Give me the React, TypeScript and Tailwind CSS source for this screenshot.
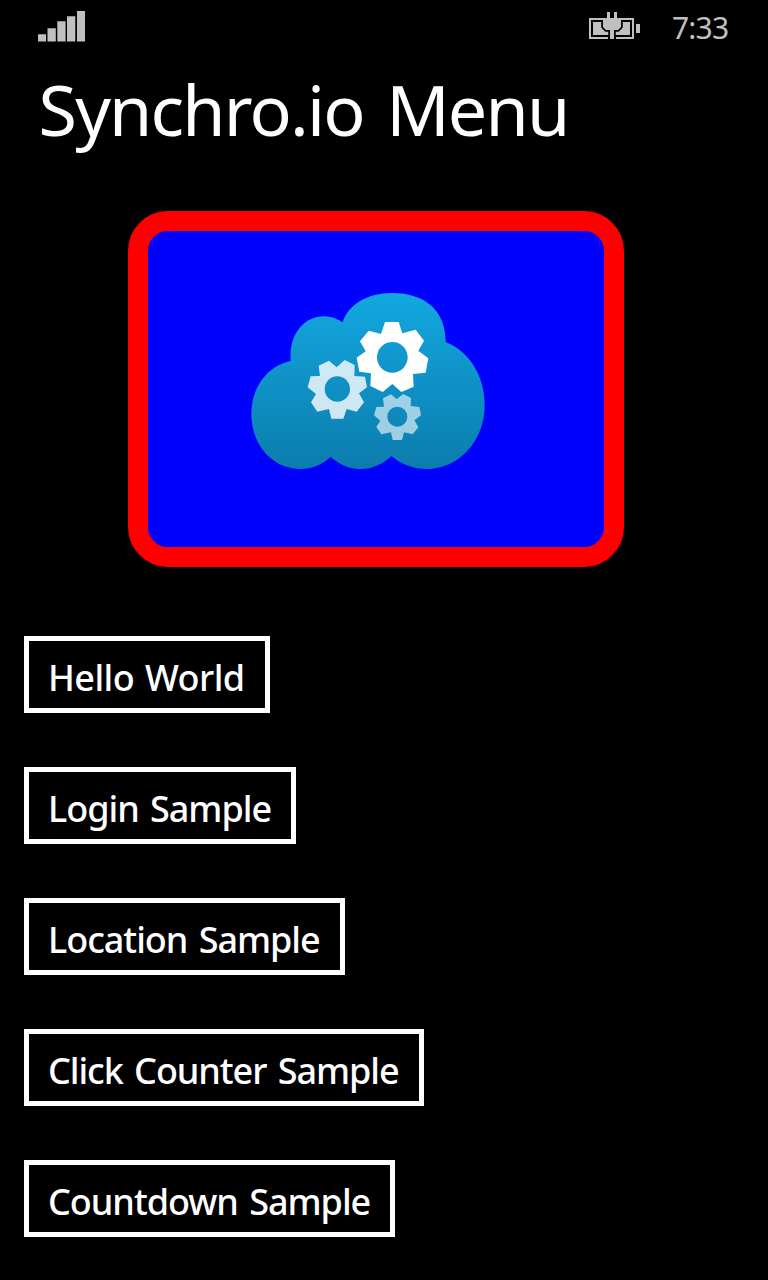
const samples = [
  { label: "Hello World", className: "w-[246px] tracking-[-0.57px] [word-spacing:2px]" },
  { label: "Login Sample", className: "w-[272px] tracking-[-1.03px] [word-spacing:3px]" },
  { label: "Location Sample", className: "w-[321px] tracking-[-1.03px] [word-spacing:3px]" },
  { label: "Click Counter Sample", className: "w-[400px] tracking-[-1.06px] [word-spacing:3px]" },
  { label: "Countdown Sample", className: "w-[371px] tracking-[-1.02px] [word-spacing:3px]" },
];

function Signal() {
  return (
    <svg width="47" height="31" viewBox="38 11 47 31" fill="#c0c0c0">
      <path d="M38 34.2h8v7.3h-8zM47.5 28.2h8.3v13.3h-8.3zM57.3 21.3h8.3v20.2h-8.3zM67 16.3h8.3v25.2H67zM77 11h8v30.5h-8z" />
    </svg>
  );
}

function Battery() {
  return (
    <svg width="51" height="28" viewBox="589 12 51 28">
      <path d="M590 19h43v19h-43z" fill="none" stroke="#c0c0c0" strokeWidth="2" />
      <path d="M593 22h37v13h-37zM636 24h4v9h-4z" fill="#c0c0c0" />
      <path d="M608 35h8v5h-8z" fill="#000" />
      <path
        d="M603 18h18v9l-3 3h-4v9h-4v-9h-4l-3-3z"
        fill="#c0c0c0"
        stroke="#000"
        strokeWidth="3.500"
        paintOrder="stroke"
      />
      <path d="M603 18h4v-6h3v6h4v-6h3v6h4v2h-18zM600 18h4v2h-4zM620 18h4v2h-4z" fill="#c0c0c0" />
    </svg>
  );
}

function CloudLogo() {
  return (
    <svg width="260" height="200" viewBox="0 0 780 600">
      <defs>
        <linearGradient id="sky" x1="0" y1="0" x2="0" y2="1">
          <stop offset="0" stopColor="#12a8e0" />
          <stop offset="1" stopColor="#0c7cad" />
        </linearGradient>
      </defs>
      <path
        fill="url(#sky)"
        d="M152 243C146 165 190 109 252 109C272 109 291 115 308 127C325 72 385 39 455 39C560 39 617 95 617 186C690 215 734 290 734 374C734 485 655 567 560 567C520 567 483 553 454 528C428 553 397 567 362 567C328 567 297 553 272 531C245 555 215 567 181 567C95 567 34 492 34 402C34 320 85 256 152 243Z"
      />
      <path
        fill="#fff"
        fillRule="evenodd"
        d="M435 126L476 126L487 160L527 149L552 182L535 212L565 235L557 278L519 282L521 320L484 336L457 312L428 336L391 318L393 280L358 275L350 233L377 214L360 184L386 152L423 162ZM411 232a46 46 0 1 0 92 0a46 46 0 1 0-92 0Z"
      />
      <path
        fill="#fff"
        fillOpacity=".8"
        fillRule="evenodd"
        d="M274 416L267 387L232 395L213 367L228 342L203 322L212 289L240 288L236 257L267 242L290 262L314 240L344 255L343 288L375 290L381 322L357 340L372 367L350 395L320 387L310 416ZM254 327a38 38 0 1 0 76 0a38 38 0 1 0-76 0Z"
      />
      <path
        fill="#fff"
        fillOpacity=".6"
        fillRule="evenodd"
        d="M458 480L453 457L424 463L409 441L421 422L402 406L409 381L432 380L429 355L453 343L470 357L490 342L513 354L512 378L538 381L543 406L523 421L535 442L518 463L492 457L486 480ZM442 410a30 30 0 1 0 60 0a30 30 0 1 0-60 0Z"
      />
    </svg>
  );
}

export default function App() {
  return (
    <main className="flex h-[1280px] w-[768px] flex-col overflow-hidden bg-black font-['Noto_Sans',sans-serif] text-white">
      <header className="flex h-[54px] items-start pt-[11px] pr-[39px] pl-[38px] text-[#c0c0c0]">
        <Signal />
        <div className="ml-auto flex items-start">
          <div className="pt-px">
            <Battery />
          </div>
          <span className="ml-[32px] w-[57px] text-[30px] leading-[33px] font-normal tracking-[-0.8px] whitespace-nowrap">7:33</span>
        </div>
      </header>
      <h1 className="pl-[38.500px] text-[70px] leading-[111px] font-normal tracking-[-1.8px] whitespace-nowrap [word-spacing:6px]">Synchro.io Menu</h1>
      <div className="mt-[46px] ml-[128px] flex h-[356px] w-[496px] shrink-0 rounded-[40px] border-[20px] border-[#f00] bg-[#00f] pt-[49px] pl-[92px]">
        <CloudLogo />
      </div>
      <nav className="mt-[69px] flex flex-col items-start gap-[54px] pl-6">
        {samples.map((sample) => (
          <button
            key={sample.label}
            className={`${sample.className} flex h-[77px] items-center border-[5px] border-white pt-[7px] pl-[19px] text-[36px] leading-[48px] font-medium whitespace-nowrap`}
          >
            {sample.label}
          </button>
        ))}
      </nav>
    </main>
  );
}
